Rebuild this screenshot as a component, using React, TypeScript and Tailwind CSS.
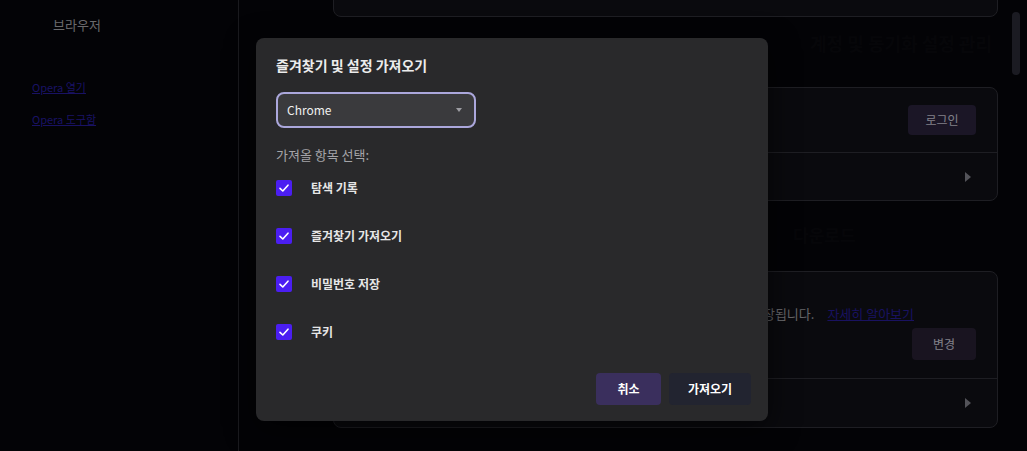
import { useState } from "react";

const importItems = [
  { id: "history", label: "탐색 기록" },
  { id: "bookmarks", label: "즐겨찾기 가져오기" },
  { id: "passwords", label: "비밀번호 저장" },
  { id: "cookies", label: "쿠키" },
];

const font = "font-['Noto_Sans_CJK_KR','Noto_Sans',sans-serif]";

/* ─── chevron used in settings rows ─── */
function RowArrow() {
  return (
    <svg viewBox="0 0 6 10" className="w-[6px] h-[10px]">
      <path d="M0 0 L6 5 L0 10 Z" fill="#8a8a94" />
    </svg>
  );
}

function Check() {
  return (
    <svg viewBox="0 0 16 16" className="w-[16px] h-[16px]">
      <path
        d="M4 8.3 L6.8 11 L12 5.2"
        fill="none"
        stroke="#ffffff"
        strokeWidth="1.6"
        strokeLinecap="round"
        strokeLinejoin="round"
      />
    </svg>
  );
}

function ImportDialog() {
  const [checked, setChecked] = useState<Record<string, boolean>>({
    history: true,
    bookmarks: true,
    passwords: true,
    cookies: true,
  });

  return (
    <div className="w-[512px] h-[383px] rounded-lg bg-[#29292b] shadow-[0_8px_30px_rgba(0,0,0,0.6)] pt-[17px] px-[20px] pb-[16px] flex flex-col">
      <h2 className="text-[14px] leading-[20px] font-semibold text-[#ececec]">
        즐겨찾기 및 설정 가져오기
      </h2>

      {/* browser select */}
      <div className="mt-[17px] w-[200px] h-[36px] rounded-lg border-2 border-[#aba7dc] bg-[#3a3a3d] flex items-center justify-between pl-[9px] pr-[12px]">
        <span className="text-[12px] text-[#f0f0f0]">Chrome</span>
        <svg viewBox="0 0 6 4" className="w-[6px] h-[4px]">
          <path d="M0 0 L6 0 L3 4 Z" fill="#9c9ca2" />
        </svg>
      </div>

      <div className="mt-[18px] text-[13px] leading-[18px] text-[#a4a4a8]">
        가져올 항목 선택:
      </div>

      <div className="flex flex-col">
        {importItems.map((item) => (
          <label
            key={item.id}
            className="h-[48px] flex items-center gap-[19px] cursor-pointer"
            onClick={() => setChecked((c) => ({ ...c, [item.id]: !c[item.id] }))}
          >
            <span
              className={
                checked[item.id]
                  ? "w-[16px] h-[16px] rounded-[2px] bg-[#4b1ef2] flex items-center justify-center"
                  : "w-[16px] h-[16px] rounded-[2px] border border-[#777] flex items-center justify-center"
              }
            >
              {checked[item.id] && <Check />}
            </span>
            <span className="text-[12px] font-bold text-[#e6e6e6]">{item.label}</span>
          </label>
        ))}
      </div>

      <div className="mt-auto flex justify-end gap-[8px] mr-[-3px]">
        <button className="w-[65px] h-[32px] rounded bg-[#3a2f5d] text-[12px] font-bold text-white">
          취소
        </button>
        <button className="w-[82px] h-[32px] rounded bg-[#222430] text-[12px] font-bold text-white">
          가져오기
        </button>
      </div>
    </div>
  );
}

export default function App() {
  return (
    <div className={`relative h-[451px] w-full overflow-hidden bg-[#05050a] flex ${font}`}>
      {/* sidebar */}
      <aside className="w-[239px] shrink-0 border-r border-[#2c2c33]">
        <div className="pt-[15px] pl-[53px] text-[13px] leading-[20px] text-[#b0b0b4]">브라우저</div>
        <nav className="mt-[43px] pl-[32px] flex flex-col gap-[14px] text-[11px] leading-[18px]">
          <a href="#" className="text-[#2a1fa6] underline">Opera 열기</a>
          <a href="#" className="text-[#2a1fa6] underline">Opera 도구함</a>
        </nav>
      </aside>

      {/* main settings */}
      <main className="flex-1 pl-[94px]">
        <div className="w-[665px] flex flex-col">
          <div className="mt-[-40px] h-[57px] rounded-lg border border-[#33333b] bg-[#111118]" />

          <div className="h-[70px] pt-[12px] text-[18px] leading-[28px] font-semibold text-[#0b0b10] text-right pr-[6px]">
            계정 및 동기화 설정 관리
          </div>

          <div className="h-[114px] rounded-lg border border-[#33333b] bg-[#111118] flex flex-col">
            <div className="h-[65px] flex items-center justify-end pr-[21px] border-b border-[#33333b]">
              <button className="w-[68px] h-[30px] rounded bg-[#2d2540] text-[12px] text-[#d8d6e2]">
                로그인
              </button>
            </div>
            <div className="flex-1 flex items-center justify-end pr-[26px]">
              <RowArrow />
            </div>
          </div>

          <div className="h-[70px] pt-[20px] text-[17px] leading-[28px] font-semibold text-[#0b0b10] pl-[460px]">
            다운로드
          </div>

          <div className="h-[157px] rounded-lg border border-[#33333b] bg-[#111118] flex flex-col">
            <div className="h-[107px] border-b border-[#33333b] pl-[20px] pr-[21px] pt-[32px] flex flex-col">
              <div className="flex items-center gap-[13px] text-[13px] leading-[20px] whitespace-nowrap">
                <span className="text-[#a8a8ae]">
                  다운로드한 파일은 브라우저에서 지정한 기본 저장 폴더에 항상 자동적으로 저장됩니다.
                </span>
                <a href="#" className="text-[#2a1ea0] underline">자세히 알아보기</a>
              </div>
              <div className="mt-[4px] flex justify-end">
                <button className="w-[64px] h-[32px] rounded bg-[#2a2236] text-[12px] text-[#d8d6e2]">
                  변경
                </button>
              </div>
            </div>
            <div className="flex-1 flex items-center justify-end pr-[26px]">
              <RowArrow />
            </div>
          </div>
        </div>
      </main>

      {/* scrollbar thumb */}
      <div className="absolute right-[7px] top-[12px] w-[8px] h-[63px] rounded-full bg-[#2e2e3a]" />

      {/* modal backdrop */}
      <div className="absolute inset-0 bg-black/40 flex justify-start items-start pt-[38px] pl-[256px]">
        <ImportDialog />
      </div>
    </div>
  );
}
